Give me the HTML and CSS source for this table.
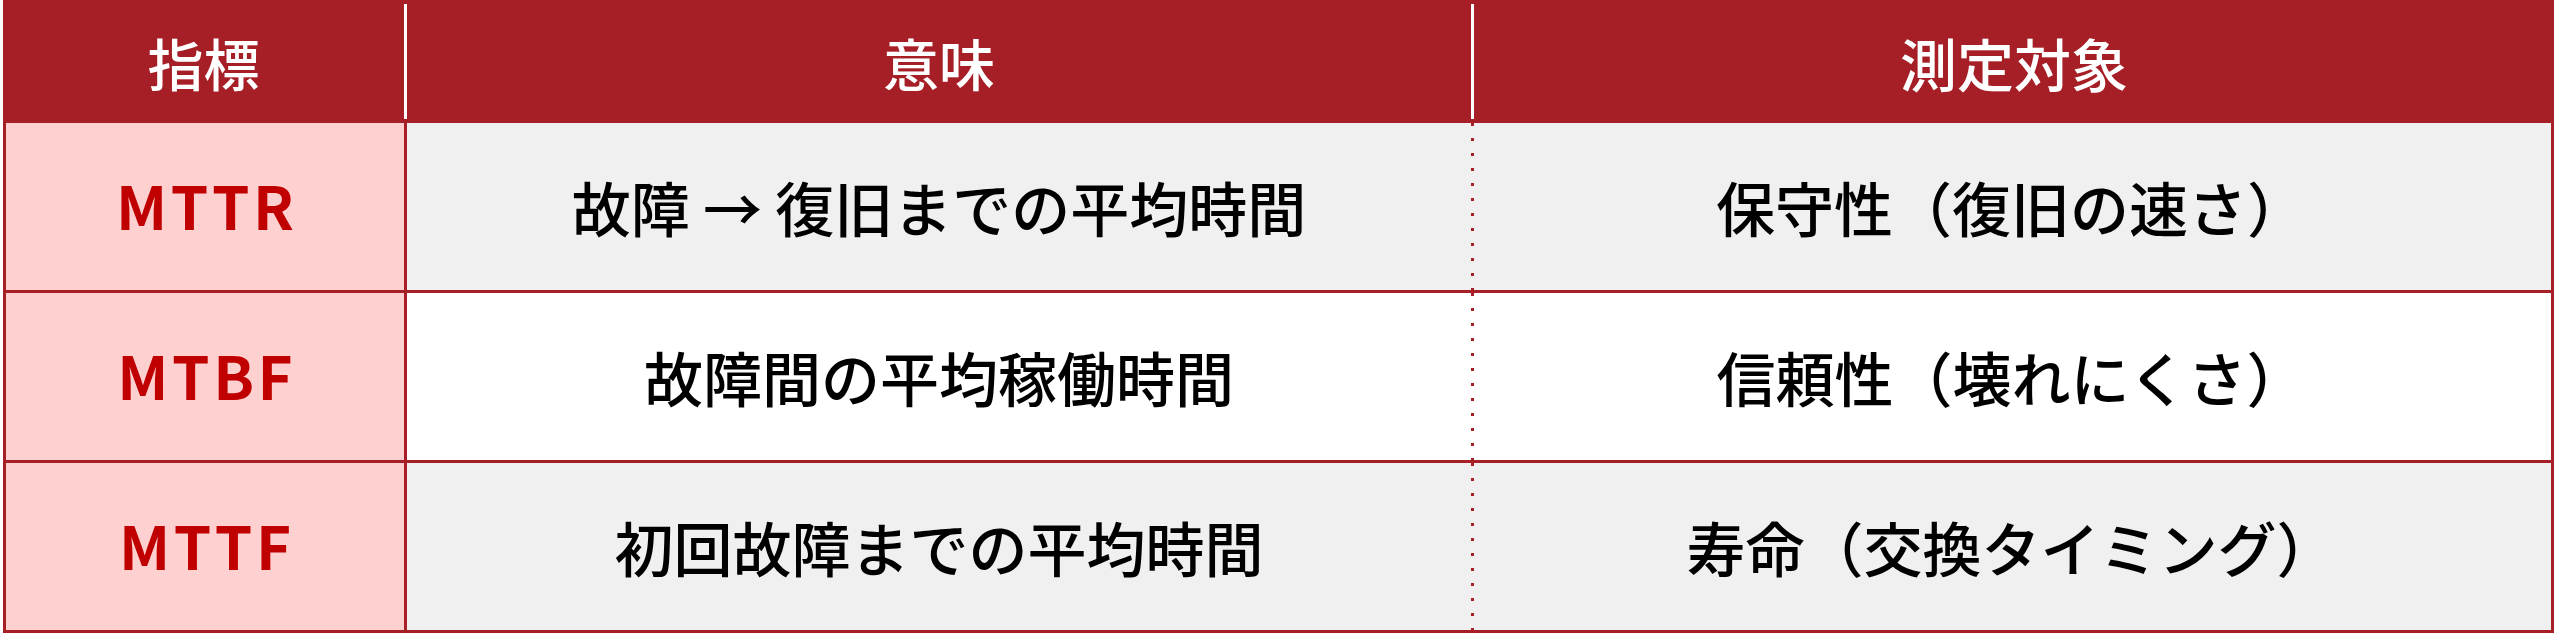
FILE: index.html
```html
<!DOCTYPE html>
<html lang="ja">
<head>
<meta charset="utf-8">
<link rel="stylesheet" href="styles.css">
</head>
<body>
<div class="table">
  <div class="row head">
    <div class="cell c1">指標</div>
    <div class="cell c2">意味</div>
    <div class="cell c3">測定対象</div>
  </div>
  <div class="row body alt">
    <div class="cell c1 key">MTTR</div>
    <div class="cell c2">故障 → 復旧までの平均時間</div>
    <div class="cell c3">保守性（復旧の速さ）</div>
  </div>
  <div class="row body">
    <div class="cell c1 key">MTBF</div>
    <div class="cell c2">故障間の平均稼働時間</div>
    <div class="cell c3">信頼性（壊れにくさ）</div>
  </div>
  <div class="row body alt">
    <div class="cell c1 key">MTTF</div>
    <div class="cell c2">初回故障までの平均時間</div>
    <div class="cell c3">寿命（交換タイミング）</div>
  </div>
</div>
</body>
</html>
```

FILE: styles.css
```css
html, body {
  margin: 0;
  padding: 0;
  background: #ffffff;
}
body {
  font-family: "Noto Sans CJK JP", "Noto Sans", sans-serif;
}
.table {
  margin-left: 3px;
  width: 2551px;
}
.row {
  display: grid;
  grid-template-columns: 404px 1067px 1fr;
}
.cell {
  display: flex;
  align-items: center;
  justify-content: center;
}
.head {
  background: #a61e26;
  height: 123px;
  padding: 4px 0;
  box-sizing: border-box;
  color: #ffffff;
  font-size: 56px;
  font-weight: 500;
}
.head .c3 {
  font-size: 57px;
}
.head .c1,
.head .c2 {
  border-right: 3px solid #ffffff;
}
.body {
  height: 170px;
  box-sizing: border-box;
  border-left: 3px solid #a61e26;
  border-right: 3px solid #a61e26;
  border-bottom: 3px solid #a61e26;
  background: #ffffff;
  font-size: 59px;
  font-weight: 500;
  color: #000000;
  grid-template-columns: 401px 1064px 1fr;
}
.body.alt {
  background: #f0f0f0;
}
.body .c1 {
  background: #ffd0d0;
  border-right: 3px solid #a61e26;
}
.body .c3 {
  background-image: linear-gradient(to bottom, #a61e26 3px, transparent 3px);
  background-size: 3px 15px;
  background-repeat: repeat-y;
  background-position: 0 0;
}
.key {
  color: #c00000;
  font-weight: 700;
  font-size: 60px;
  letter-spacing: 0.06em;
  text-indent: 0.06em;
  padding-bottom: 6px;
}
```
